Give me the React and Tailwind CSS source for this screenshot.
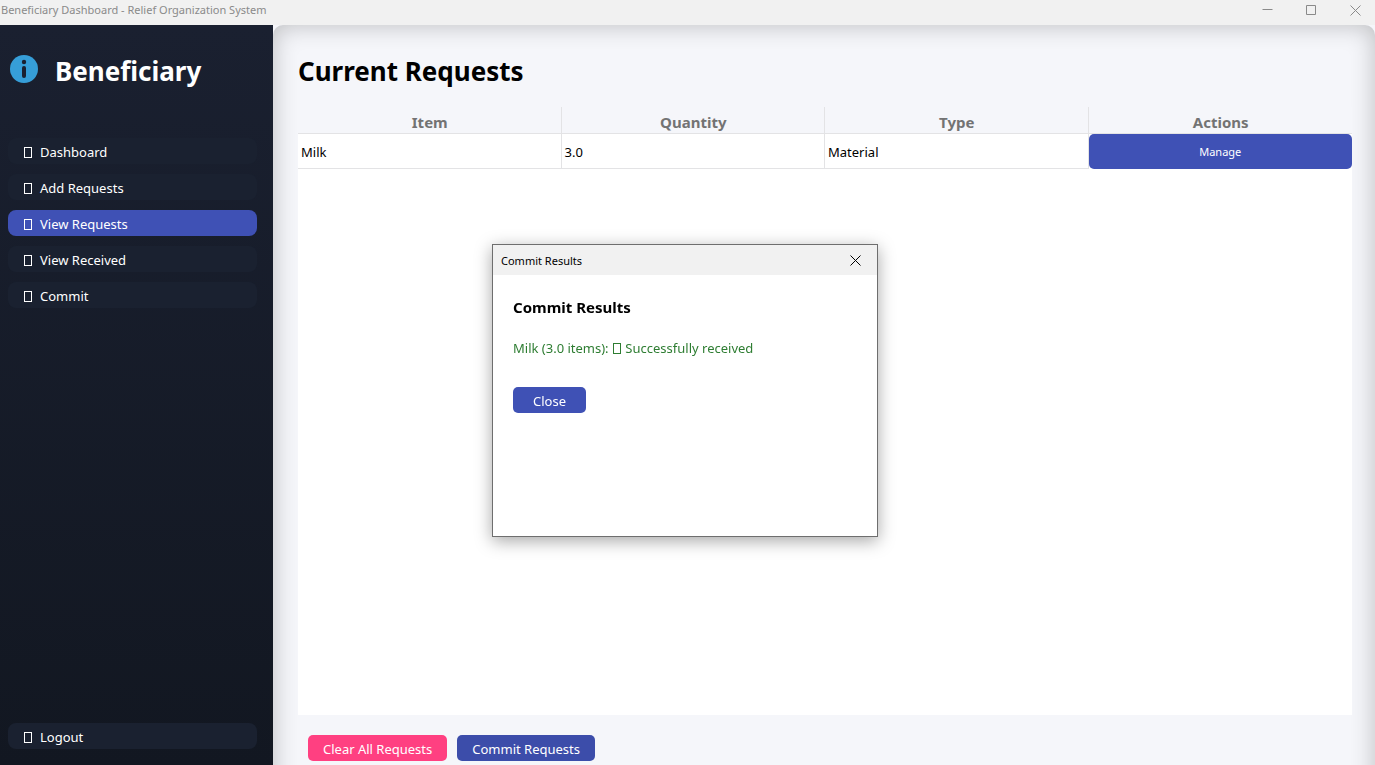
import React from "react";

function Tofu({ className = "" }) {
  return <span aria-hidden="true" className={`inline-block h-[11px] w-[8px] border border-current ${className}`} />;
}

function CrossIcon() {
  return (
    <svg width="11" height="11" viewBox="0 0 11 11" fill="none" stroke="currentColor">
      <path d="M0.5 0.5L10.5 10.5M10.5 0.5L0.5 10.5" />
    </svg>
  );
}

function TitleBar() {
  return (
    <header className="flex h-[25px] shrink-0 items-start justify-between bg-[#f1f1f1] pl-px text-[#8a8a8a]">
      <span className="pt-[2px] text-[11px] leading-4">Beneficiary Dashboard - Relief Organization System</span>
      <div className="flex h-5 gap-1">
        <button aria-label="Minimize" className="flex w-10 items-center justify-center">
          <svg width="11" height="11" viewBox="0 0 11 11" stroke="currentColor"><path d="M0.5 4.5H10.5" /></svg>
        </button>
        <button aria-label="Maximize" className="flex w-10 items-center justify-center">
          <svg width="11" height="11" viewBox="0 0 11 11" fill="none" stroke="currentColor"><path d="M0.5 0.5H9.5V9.5H0.5Z" /></svg>
        </button>
        <button aria-label="Close window" className="flex w-10 items-center justify-center">
          <CrossIcon />
        </button>
      </div>
    </header>
  );
}

function NavButton({ label, active = false }) {
  return (
    <button
      aria-current={active ? "page" : undefined}
      className={`flex h-[26px] w-full items-center gap-2 rounded-lg pl-4 pt-[2px] text-left text-[13px] leading-5 text-white ${active ? "bg-[#3f51b5]" : "bg-[#1a2130]"}`}
    >
      <Tofu />
      {label}
    </button>
  );
}

function Sidebar() {
  const items = ["Dashboard", "Add Requests", "View Requests", "View Received", "Commit"];
  return (
    <aside className="flex w-[273px] shrink-0 flex-col bg-linear-to-b from-[#1a2030] to-[#121721] pb-4 pl-2 pr-4 pt-[22px]">
      <div className="flex h-11 items-center gap-[17px] pl-[2px]">
        <svg width="28" height="28" viewBox="0 0 28 28">
          <circle cx="14" cy="14" r="14" fill="#369ed8" />
          <circle cx="14" cy="7" r="2.2" fill="#1a2030" />
          <path d="M14 13V21" stroke="#1a2030" strokeWidth="4" strokeLinecap="round" />
        </svg>
        <h2 className="pt-1 text-[26px] font-bold leading-10 text-white">Beneficiary</h2>
      </div>
      <nav className="mt-[47px] flex flex-1 flex-col gap-[10px]">
        {items.map((label) => (
          <NavButton key={label} label={label} active={label === "View Requests"} />
        ))}
      </nav>
      <NavButton label="Logout" />
    </aside>
  );
}

function RequestsTable() {
  const columns = ["Item", "Quantity", "Type", "Actions"];
  return (
    <div className="flex-1 bg-white">
      <table className="w-full table-fixed border-separate border-spacing-0">
        <thead>
          <tr className="h-[27px] bg-[#f5f6fa]">
            {columns.map((name) => (
              <th key={name} scope="col" className="border-b border-r border-[#e3e3e5] p-0 pl-px pt-1 text-[15px] font-bold leading-5 text-[#737373] last:border-r-0">
                {name}
              </th>
            ))}
          </tr>
        </thead>
        <tbody>
          <tr className="h-[35px] text-[13px] leading-5 text-black">
            {["Milk", "3.0", "Material"].map((value) => (
              <td key={value} className="border-b border-r border-[#e3e3e5] p-0 pl-[3px] pt-[2px]">{value}</td>
            ))}
            <td className="p-0">
              <button className="block h-[35px] w-full rounded-[5px] bg-[#3f51b5] pt-px text-[11px] leading-4 text-white">Manage</button>
            </td>
          </tr>
        </tbody>
      </table>
    </div>
  );
}

function CommitDialog() {
  return (
    <div className="pointer-events-none fixed inset-0 flex items-center justify-center pr-[5px] pt-4">
      <section
        role="dialog"
        aria-labelledby="commit-title"
        className="pointer-events-auto flex min-h-[293px] w-[386px] flex-col border border-[#6e6e6e] bg-white shadow-[0_4px_16px_rgba(0,0,0,0.35)]"
      >
        <div className="flex h-[30px] items-center justify-between bg-[#f1f1f1] pl-2 text-black">
          <span id="commit-title" className="pt-px text-[11px] leading-4">Commit Results</span>
          <button aria-label="Close dialog" className="flex h-full w-11 items-center justify-center">
            <CrossIcon />
          </button>
        </div>
        <div className="flex flex-col items-start px-5 pt-5">
          <h3 className="text-[15px] font-bold leading-6 text-black">Commit Results</h3>
          <p className="mt-[19px] text-[13px] leading-5 text-[#2e7d32]">
            Milk (3.0 items): <Tofu className="mx-px translate-y-px" /> Successfully received
          </p>
          <button className="mt-[29px] h-[26px] rounded-[5px] bg-[#3f51b5] px-5 pt-[2px] text-[13px] leading-5 text-white">Close</button>
        </div>
      </section>
    </div>
  );
}

export default function App() {
  return (
    <div className="flex min-h-screen flex-col bg-[#f5f6fa] font-['Noto_Sans','Open_Sans',sans-serif]">
      <TitleBar />
      <div className="flex flex-1">
        <Sidebar />
        <main className="relative flex min-w-0 flex-1 flex-col overflow-hidden pb-1 pl-[25px] pr-[23px] pt-[26px]">
          <div className="pointer-events-none absolute -bottom-10 left-0 right-0 top-0 rounded-[10px] shadow-[inset_0_0_24px_rgba(0,0,0,0.24)]" />
          <h1 className="text-[26px] font-bold leading-10 text-black">Current Requests</h1>
          <div className="relative mt-4 flex flex-1 flex-col">
            <RequestsTable />
          </div>
          <div className="mt-5 flex gap-[10px] pl-[10px]">
            <button className="h-[26px] rounded-[5px] bg-[#ff4081] px-[15px] pt-[2px] text-[13px] leading-5 text-white">Clear All Requests</button>
            <button className="h-[26px] rounded-[5px] bg-[#3c4daa] px-[15px] pt-[2px] text-[13px] leading-5 text-white">Commit Requests</button>
          </div>
        </main>
      </div>
      <CommitDialog />
    </div>
  );
}
